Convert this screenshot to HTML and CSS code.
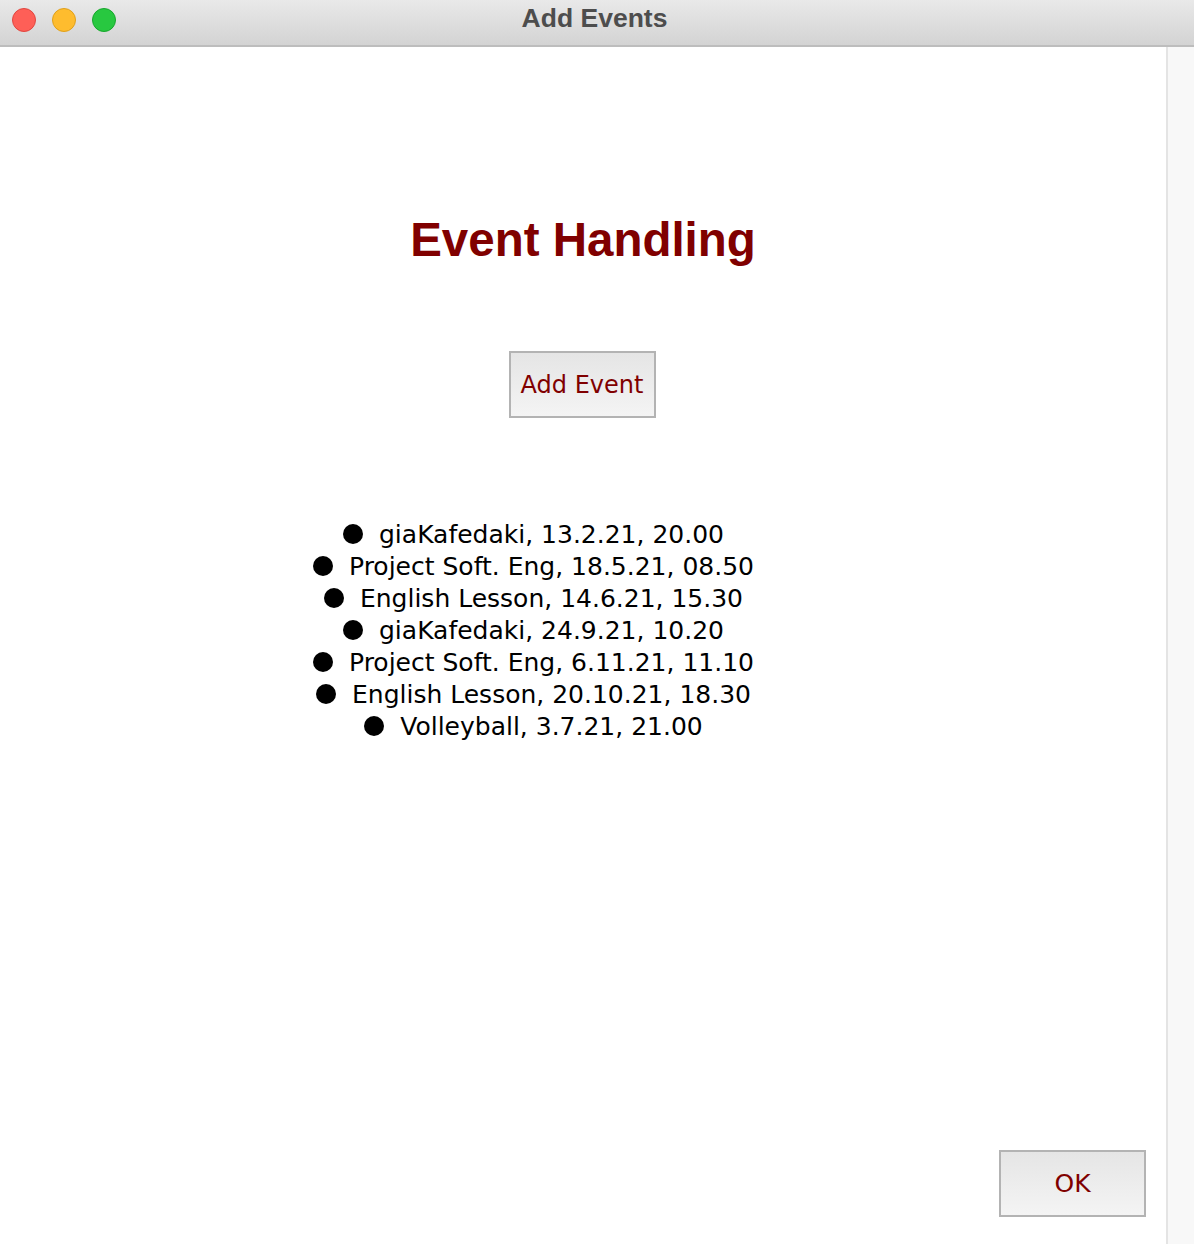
FILE: index.html
```html
<!DOCTYPE html>
<html>
<head>
<meta charset="utf-8">
<title>Add Events</title>
<link rel="stylesheet" href="styles.css">
</head>
<body>
<div class="window">
  <div class="titlebar">
    <div class="lights">
      <span class="light red"></span>
      <span class="light yellow"></span>
      <span class="light green"></span>
    </div>
    <div class="wintitle">Add Events</div>
    <div></div>
  </div>
  <div class="body">
    <div class="main">
      <h1 class="heading">Event Handling</h1>
      <button class="btn add">Add Event</button>
      <ul class="events">
        <li><span class="dot"></span>giaKafedaki, 13.2.21, 20.00</li>
        <li><span class="dot"></span>Project Soft. Eng, 18.5.21, 08.50</li>
        <li><span class="dot"></span>English Lesson, 14.6.21, 15.30</li>
        <li><span class="dot"></span>giaKafedaki, 24.9.21, 10.20</li>
        <li><span class="dot"></span>Project Soft. Eng, 6.11.21, 11.10</li>
        <li><span class="dot"></span>English Lesson, 20.10.21, 18.30</li>
        <li><span class="dot"></span>Volleyball, 3.7.21, 21.00</li>
      </ul>
      <button class="btn ok">OK</button>
    </div>
    <div class="strip"></div>
  </div>
</div>
</body>
</html>
```
FILE: styles.css
```css
html, body {
  margin: 0;
  padding: 0;
  background: #ffffff;
}
.window {
  width: 1194px;
  height: 1244px;
  display: flex;
  flex-direction: column;
  overflow: hidden;
}
.titlebar {
  height: 45px;
  flex: 0 0 45px;
  border-bottom: 2px solid #bdbdbd;
  background: linear-gradient(#e9e9e9, #d3d3d3);
  display: grid;
  grid-template-columns: 1fr auto 1fr;
  align-items: start;
}
.lights {
  display: flex;
  gap: 16px;
  padding: 8px 0 0 12px;
}
.light {
  width: 24px;
  height: 24px;
  border-radius: 50%;
  box-sizing: border-box;
}
.red { background: #fe5f57; border: 1px solid #e1463f; }
.yellow { background: #febc2e; border: 1px solid #e0a01a; }
.green { background: #28c840; border: 1px solid #17a72d; }
.wintitle {
  font-family: "Liberation Sans", Arial, sans-serif;
  font-weight: bold;
  font-size: 26.5px;
  line-height: 37px;
  color: #4d4d4d;
  padding-right: 5px;
}
.body {
  flex: 1;
  display: flex;
  min-height: 0;
}
.main {
  flex: 1;
  display: flex;
  flex-direction: column;
  align-items: center;
}
.strip {
  width: 26px;
  flex: 0 0 26px;
  border-left: 2px solid #e4e4e4;
  background: #f8f8f8;
}
.heading {
  margin: 166px 0 0 0;
  font-family: "Liberation Sans", Arial, sans-serif;
  font-weight: bold;
  font-size: 47.5px;
  line-height: 54px;
  color: #800000;
}
.btn {
  box-sizing: border-box;
  width: 147px;
  height: 67px;
  border: 2px solid #b3b3b3;
  border-radius: 0;
  background: linear-gradient(#e5e5e5, #f4f4f4);
  color: #800000;
  font-family: "DejaVu Sans", sans-serif;
  font-size: 24px;
  padding: 0;
  display: flex;
  align-items: center;
  justify-content: center;
}
.add {
  margin-top: 84px;
  margin-right: 2px;
}
.events {
  list-style: none;
  margin: 101px 0 0 0;
  padding: 0 99px 0 0;
  align-self: stretch;
  text-align: center;
  font-family: "DejaVu Sans", sans-serif;
  font-size: 25px;
  line-height: 32px;
  color: #000000;
}
.dot {
  display: inline-block;
  width: 20px;
  height: 20px;
  border-radius: 50%;
  background: #000000;
  margin-right: 16px;
  position: relative;
  top: 1px;
}
.ok {
  margin-top: auto;
  margin-bottom: 27px;
  align-self: flex-end;
  margin-right: 20px;
  font-size: 25px;
}
```
